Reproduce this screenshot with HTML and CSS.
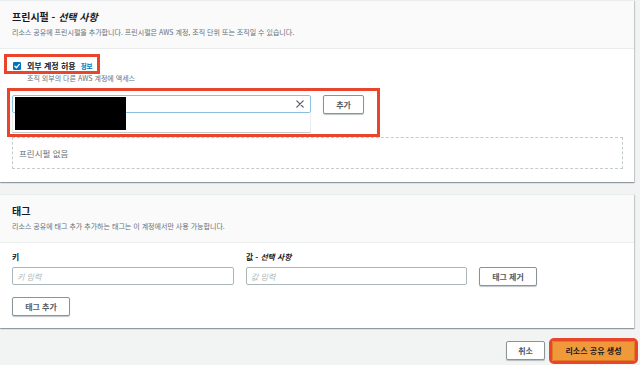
FILE: index.html
```html
<!DOCTYPE html>
<html lang="ko">
<head>
<meta charset="utf-8">
<link rel="stylesheet" href="styles.css">
</head>
<body>
<div class="page">
  <section class="panel">
    <header class="panel-head">
      <h2 class="title">프린시펄 - <em>선택 사항</em></h2>
      <p class="desc">리소스 공유에 프린시펄을 추가합니다. 프린시펄은 AWS 계정, 조직 단위 또는 조직일 수 있습니다.</p>
    </header>
    <div class="panel-body body-principal">
      <div class="check-row annot">
        <span class="checkbox"><svg width="8" height="8" viewBox="0 0 8 8"><rect width="8" height="8" rx="1.3" fill="#0073bb"/><path d="M1.8 4.1 L3.4 5.7 L6.3 2.4" fill="none" stroke="#fff" stroke-width="1.3" stroke-linecap="round" stroke-linejoin="round"/></svg></span>
        <span class="check-label">외부 계정 허용</span>
        <a class="info">정보</a>
      </div>
      <p class="check-desc">조직 외부의 다른 AWS 계정에 액세스</p>
      <div class="add-row annot">
        <div class="combo">
          <div class="combo-input">
            <svg class="clear" width="8" height="8" viewBox="0 0 8 8"><path d="M0.8 0.8 L7.2 7.2 M7.2 0.8 L0.8 7.2" stroke="#545b64" stroke-width="1.2" stroke-linecap="round"/></svg>
          </div>
          <div class="combo-list"></div>
          <div class="redact"></div>
        </div>
        <button class="btn btn-add">추가</button>
      </div>
      <div class="empty-box">프린시펄 없음</div>
    </div>
  </section>

  <section class="panel panel-tags">
    <header class="panel-head">
      <h2 class="title">태그</h2>
      <p class="desc">리소스 공유에 태그 추가 추가하는 태그는 이 계정에서만 사용 가능합니다.</p>
    </header>
    <div class="panel-body body-tags">
      <div class="tag-grid">
        <label class="field-label">키</label>
        <label class="field-label">값 - <em>선택 사항</em></label>
        <span></span>
        <input class="text-input" type="text" placeholder="키 입력">
        <input class="text-input" type="text" placeholder="값 입력">
        <button class="btn btn-remove">태그 제거</button>
      </div>
      <div class="tag-actions">
        <button class="btn btn-add-tag">태그 추가</button>
      </div>
    </div>
  </section>

  <footer class="footer">
    <button class="btn btn-cancel">취소</button>
    <button class="btn btn-primary annot">리소스 공유 생성</button>
  </footer>
</div>
</body>
</html>
```

FILE: styles.css
```css
* {
  box-sizing: border-box;
  margin: 0;
  padding: 0;
}

html, body {
  width: 640px;
  height: 365px;
  overflow: hidden;
}

body {
  background: #f2f3f3;
  font-family: "Noto Sans CJK KR", "Noto Sans", sans-serif;
  color: #16191f;
}

.panel {
  background: #fff;
  margin-right: 6px;
  border-top: 1px solid #eaeded;
  box-shadow: 0 1px 1px 0 rgba(0, 28, 36, 0.3), 1px 1px 1px 0 rgba(0, 28, 36, 0.15);
}

.panel-tags {
  margin-top: 12px;
}

.panel-head {
  background: #fafafa;
  border-bottom: 1px solid #eaeded;
  padding: 9px 12px 11px;
}

.title {
  font-size: 10px;
  line-height: 14px;
  height: 14px;
  font-weight: 700;
}

.title em,
.field-label em {
  font-style: italic;
}

.desc {
  margin-top: 3px;
  font-size: 7px;
  line-height: 10px;
  height: 10px;
  color: #687078;
  white-space: nowrap;
}

.panel-body {
  padding: 0 11px 0 12px;
}

.body-principal {
  padding-top: 8px;
  padding-bottom: 13px;
}

.annot {
  outline: 3px solid #e8452c;
}

.check-row {
  display: flex;
  align-items: center;
  width: 90px;
  height: 14px;
  margin-left: -5px;
  padding: 4px 0 0 6px;
}

.checkbox {
  display: flex;
  width: 8px;
  height: 8px;
}

.check-label {
  margin-left: 6px;
  font-size: 8px;
  line-height: 10px;
  font-weight: 700;
  white-space: nowrap;
}

.info {
  margin-left: 5px;
  font-size: 6.5px;
  line-height: 10px;
  font-weight: 700;
  color: #0073bb;
  white-space: nowrap;
}

.check-desc {
  margin-top: 3px;
  padding-left: 15px;
  font-size: 7px;
  line-height: 8px;
  height: 8px;
  color: #687078;
  white-space: nowrap;
}

.add-row {
  display: flex;
  align-items: flex-start;
  width: 367px;
  height: 43px;
  margin: 9px 0 0 -2px;
  padding: 4px 13px 1px 2px;
}

.combo {
  position: relative;
  width: 299px;
}

.combo-input {
  height: 18px;
  border: 1px solid #8cc0de;
  border-radius: 2px;
  display: flex;
  align-items: center;
  justify-content: flex-end;
  padding-right: 6px;
}

.combo-list {
  height: 20px;
  border: 1px solid #eaeded;
  border-top: 0;
  border-bottom-color: #c6cccd;
}

.redact {
  position: absolute;
  left: 3px;
  top: 2px;
  width: 111px;
  height: 33px;
  background: #000;
}

.btn {
  display: flex;
  align-items: center;
  justify-content: center;
  font-family: inherit;
  background: #fff;
  border: 1px solid #879596;
  border-radius: 2px;
  color: #545b64;
  font-weight: 700;
  font-size: 8px;
  line-height: 1;
  box-shadow: 0 1px 1px 0 rgba(0, 28, 36, 0.25);
  white-space: nowrap;
}

.btn-add {
  margin-left: 12px;
  width: 41px;
  height: 19px;
}

.empty-box {
  margin-top: 3px;
  height: 32px;
  border: 1px dashed #c4cbcd;
  display: flex;
  align-items: center;
  padding-left: 6px;
  font-size: 8.5px;
  color: #687078;
}

.body-tags {
  padding-top: 9px;
  padding-bottom: 12px;
}

.tag-grid {
  display: grid;
  grid-template-columns: 222px 221px 58px;
  grid-template-rows: 10px 19px;
  column-gap: 12px;
  row-gap: 5px;
  align-items: start;
}

.field-label {
  font-size: 7.8px;
  line-height: 10px;
  height: 10px;
  font-weight: 600;
  white-space: nowrap;
}

.text-input {
  display: block;
  width: 100%;
  height: 18px;
  border: 1px solid #aab7b8;
  border-radius: 2px;
  padding: 0 4px;
  font-family: inherit;
  font-size: 8px;
  font-style: italic;
  outline: none;
  background: #fff;
}

.text-input::placeholder {
  color: #aab7b8;
  font-style: italic;
}

.btn-remove {
  width: 58px;
  height: 19px;
}

.tag-actions {
  display: flex;
  margin-top: 11px;
}

.btn-add-tag {
  width: 58px;
  height: 19px;
}

.footer {
  display: flex;
  justify-content: flex-end;
  align-items: flex-start;
  gap: 7px;
  padding: 13px 5px 0 0;
}

.btn-cancel {
  width: 39px;
  height: 19px;
}

.btn-primary {
  width: 83px;
  height: 20px;
  background: #f0993a;
  border-color: #e07b1f;
  color: #16191f;
  box-shadow: none;
}
```
